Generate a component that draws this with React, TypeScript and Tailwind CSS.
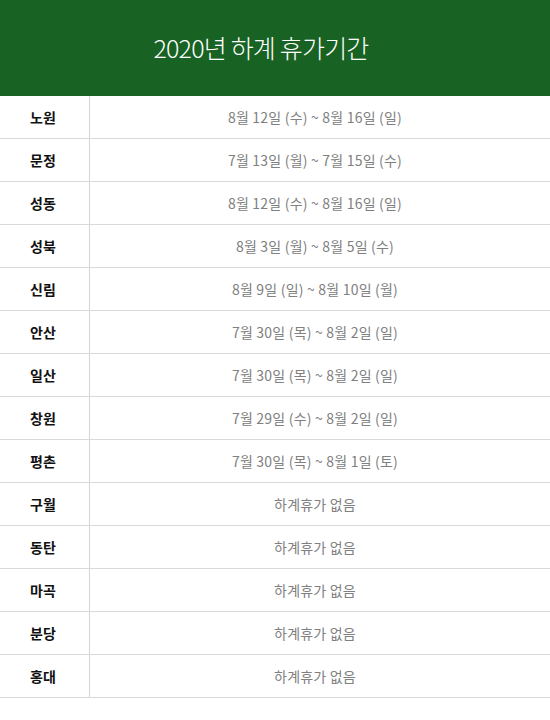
import React from "react";

const rows: [string, string][] = [
  ["노원", "8월 12일 (수) ~ 8월 16일 (일)"],
  ["문정", "7월 13일 (월) ~ 7월 15일 (수)"],
  ["성동", "8월 12일 (수) ~ 8월 16일 (일)"],
  ["성북", "8월 3일 (월) ~ 8월 5일 (수)"],
  ["신림", "8월 9일 (일) ~ 8월 10일 (월)"],
  ["안산", "7월 30일 (목) ~ 8월 2일 (일)"],
  ["일산", "7월 30일 (목) ~ 8월 2일 (일)"],
  ["창원", "7월 29일 (수) ~ 8월 2일 (일)"],
  ["평촌", "7월 30일 (목) ~ 8월 1일 (토)"],
  ["구월", "하계휴가 없음"],
  ["동탄", "하계휴가 없음"],
  ["마곡", "하계휴가 없음"],
  ["분당", "하계휴가 없음"],
  ["홍대", "하계휴가 없음"],
];

export default function App() {
  return (
    <div
      className="w-[550px] h-[720px] bg-white"
      style={{ fontFamily: '"Noto Sans CJK KR", "Noto Sans", sans-serif' }}
    >
      <div className="h-[96px] bg-[#186323] flex items-center justify-center pr-[28px]">
        <span className="text-white text-[25px] font-light tracking-[-0.8px]">2020년 하계 휴가기간</span>
      </div>
      {rows.map(([name, period]) => (
        <div key={name} className="flex h-[43px] border-b border-[#dadada]">
          <div className="w-[90px] border-r border-[#d4d4d4] flex items-center justify-center text-[14px] font-bold text-[#111] pr-[3px]">
            {name}
          </div>
          <div className="flex-1 flex items-center justify-center text-[14px] text-[#808080] tracking-[0.2px] pr-[10px]">
            {period}
          </div>
        </div>
      ))}
    </div>
  );
}
